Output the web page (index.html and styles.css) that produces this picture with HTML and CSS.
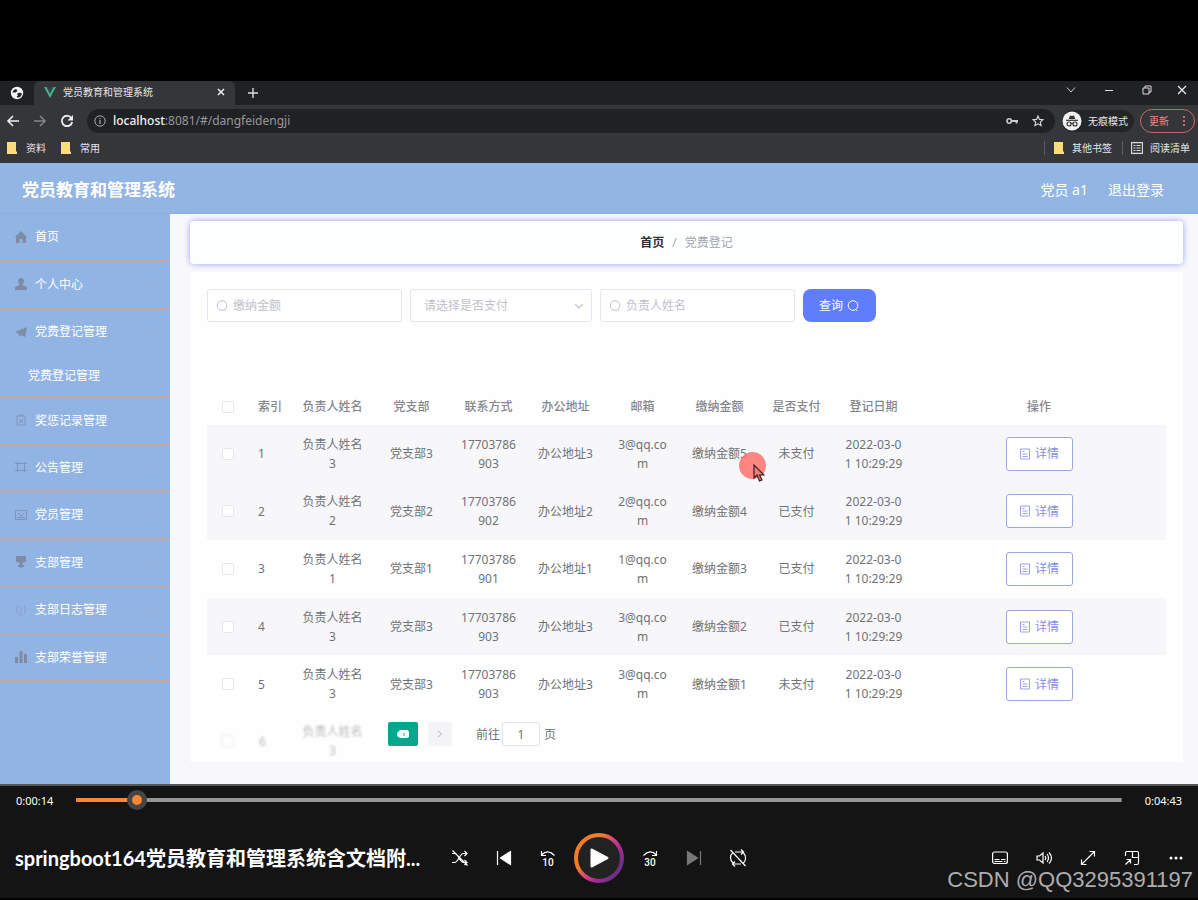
FILE: index.html
```html
<!DOCTYPE html>
<html lang="zh-CN">
<head>
<meta charset="utf-8">
<meta name="viewport" content="width=device-width, initial-scale=1">
<title>党员教育和管理系统</title>
<link rel="stylesheet" href="styles.css">
</head>
<body>
<svg class="defs" width="0" height="0" aria-hidden="true">
  <symbol id="i-search" viewBox="0 0 14 14"><circle cx="7" cy="6.5" r="4.8"/><path d="M9.8 10.5l1.6 1.6"/></symbol>
  <symbol id="i-doc" viewBox="0 0 12 12"><path d="M1.5 1h9v10h-9zM3.5 3.5h2M3.5 6h5M3.5 8.5h5"/></symbol>
  <symbol id="i-folder" viewBox="0 0 12 12"><path d="M1 0h9v9l1 1v2H1z" fill="#fbdc7c"/></symbol>
  <symbol id="i-arrow" viewBox="0 0 8 6"><path d="M1 1.5l3 3 3-3"/></symbol>
</svg>

<main class="video">
  <header class="browser">
    <div class="tabs">
      <span class="tab-pinned"><svg width="14" height="14" viewBox="0 0 14 14"><circle cx="7" cy="7" r="6.2" fill="#f4f4f4"/><path d="M2.500 6.500Q3 3.500 6 3l1.500 1.500L6 6.500H4.500zM7 8l2-1.500 3 1Q11.500 11 8 11.800L6.500 10.500 8 9.500z" fill="#25262a"/></svg></span>
      <div class="tab">
        <svg width="12" height="11" viewBox="0 0 12 11"><path d="M0 0h2.500L6 6.500 9.500 0H12L6 11z" fill="#3fb488"/><path d="M2.500 0h2L6 2.800 7.500 0h2L6 6.500z" fill="#2f4a55"/></svg>
        <span class="tab-title">党员教育和管理系统</span>
        <button class="icon-btn" aria-label="关闭标签"><svg width="8" height="8" viewBox="0 0 8 8"><path d="M1 1l6 6M7 1L1 7" stroke="#eee" stroke-width="1.500"/></svg></button>
      </div>
      <button class="icon-btn new-tab" aria-label="新标签"><svg width="12" height="12" viewBox="0 0 12 12"><path d="M6 1v10M1 6h10" stroke="#ddd" stroke-width="1.400"/></svg></button>
      <div class="window-controls">
        <button class="icon-btn" aria-label="搜索标签"><svg width="10" height="8" viewBox="0 0 10 8"><path d="M1 1.500l4 4.500 4-4.500" stroke="#ccc" fill="none"/></svg></button>
        <button class="icon-btn" aria-label="最小化"><svg width="10" height="8" viewBox="0 0 10 8"><path d="M1 4.500h8" stroke="#ddd"/></svg></button>
        <button class="icon-btn" aria-label="还原"><svg width="10" height="10" viewBox="0 0 10 10"><path d="M1 3h6v6H1zM3 3V1h6v6H7" stroke="#ddd" fill="none"/></svg></button>
        <button class="icon-btn" aria-label="关闭"><svg width="10" height="10" viewBox="0 0 10 10"><path d="M1 1l8 8M9 1L1 9" stroke="#eee" stroke-width="1.200"/></svg></button>
      </div>
    </div>
    <div class="toolbar">
      <button class="icon-btn" aria-label="后退"><svg width="14" height="12" viewBox="0 0 14 12"><path d="M13 6H2M7 1L2 6l5 5" stroke="#eee" stroke-width="1.600" fill="none"/></svg></button>
      <button class="icon-btn" aria-label="前进"><svg width="14" height="12" viewBox="0 0 14 12"><path d="M1 6h11M7 1l5 5-5 5" stroke="#85868a" stroke-width="1.500" fill="none"/></svg></button>
      <button class="icon-btn" aria-label="刷新"><svg width="14" height="14" viewBox="0 0 14 14"><path d="M11.500 4.200A5.200 5.200 0 1 0 12.200 8" stroke="#eee" stroke-width="1.800" fill="none"/><path d="M13 1v5.500H7.500z" fill="#eee"/></svg></button>
      <div class="address">
        <svg width="12" height="12" viewBox="0 0 12 12"><circle cx="6" cy="6" r="5.200" stroke="#aaa" fill="none"/><path d="M6 5v4M6 3v1" stroke="#aaa" stroke-width="1.200"/></svg>
        <span class="url"><b>localhost</b>:8081/#/dangfeidengji</span>
        <svg width="12" height="8" viewBox="0 0 12 8"><circle cx="3.200" cy="4" r="2.200" stroke="#ccc" stroke-width="1.600" fill="none"/><path d="M5.500 4H12M10.500 4v2.500" stroke="#ccc" stroke-width="1.800"/></svg>
        <svg width="12" height="12" viewBox="0 0 12 12"><path d="M6 1l1.400 3.400 3.600.3-2.700 2.400.8 3.600L6 8.800l-3.100 1.900.8-3.600L1 4.700l3.600-.3z" stroke="#ddd" stroke-width="1.100" fill="none"/></svg>
      </div>
      <div class="incognito">
        <svg width="20" height="20" viewBox="0 0 20 20"><circle cx="10" cy="10" r="9.500" fill="#f2f2f3"/><path d="M6.800 8L8 4.500l2 .6 2-.6L13.200 8z" fill="#333"/><path d="M4 9.300h12" stroke="#333" stroke-width="1.200"/><g fill="none" stroke="#333" stroke-width="1.200"><circle cx="7" cy="13" r="2"/><circle cx="13" cy="13" r="2"/><path d="M9 12.600q1-.6 2 0"/></g></svg>
        <span>无痕模式</span>
      </div>
      <button class="update">更新<svg width="4" height="12" viewBox="0 0 4 12" fill="#e8837c"><circle cx="2" cy="2" r="1.100"/><circle cx="2" cy="6" r="1.100"/><circle cx="2" cy="10" r="1.100"/></svg></button>
    </div>
    <div class="bookmarks">
      <a href="#"><svg width="12" height="12"><use href="#i-folder"/></svg>资料</a>
      <a href="#"><svg width="12" height="12"><use href="#i-folder"/></svg>常用</a>
      <a href="#" class="other"><svg width="12" height="12"><use href="#i-folder"/></svg>其他书签</a>
      <a href="#" class="reading"><svg width="12" height="12" viewBox="0 0 12 12"><path d="M.600.600h10.800v10.800H.600zM2.500 3.500h2M2.500 6h2M2.500 8.500h2M5.500 3.500h4M5.500 6h4M5.500 8.500h4" stroke="#ddd" stroke-width="1.100" fill="none"/></svg>阅读清单</a>
    </div>
  </header>

  <div class="app-head">
    <h1>党员教育和管理系统</h1>
    <span>党员 a1</span>
    <a href="#">退出登录</a>
  </div>

  <div class="app-body">
    <nav class="side">
      <ul>
        <li><a href="#"><svg width="12" height="12" viewBox="0 0 12 12"><path d="M6 0l6 6-1 1v5H7.500V8h-3v4H1V7L0 6z"/></svg>首页</a></li>
        <li><a href="#"><svg width="12" height="12" viewBox="0 0 12 12"><circle cx="6" cy="3" r="3"/><path d="M4.500 5h3v2l4.500 2v3H0V9l4.500-2z"/></svg>个人中心<svg class="arrow"><use href="#i-arrow"/></svg></a></li>
        <li class="open"><a href="#"><svg width="12" height="12" viewBox="0 0 12 12"><path d="M0 6l12-5-2 10-4-2-2 2-.5-3.500z"/></svg>党费登记管理<svg class="arrow"><use href="#i-arrow"/></svg></a></li>
        <li class="sub"><a href="#">党费登记管理</a></li>
        <li><a href="#"><svg class="line" width="12" height="12" viewBox="0 0 12 12"><path d="M2 2h8v9H2zM4 1h4M4 5l4 4M8 5L4 9"/></svg>奖惩记录管理<svg class="arrow"><use href="#i-arrow"/></svg></a></li>
        <li><a href="#"><svg class="line" width="12" height="12" viewBox="0 0 12 12"><path d="M0 2.500h12M0 9.500h12M2.500 1v10M9.500 1v10"/></svg>公告管理<svg class="arrow"><use href="#i-arrow"/></svg></a></li>
        <li><a href="#"><svg class="line" width="12" height="12" viewBox="0 0 12 12"><path d="M.500 1.500h11v9H.500zM3 4l3 3 3-3M2 8.500h8"/></svg>党员管理<svg class="arrow"><use href="#i-arrow"/></svg></a></li>
        <li><a href="#"><svg width="12" height="12" viewBox="0 0 12 12"><path d="M1 0h10v5l-1 1.500H7.500V9H9v2H7v1H5v-1H3V9h1.500V6.500H2L1 5z"/></svg>支部管理<svg class="arrow"><use href="#i-arrow"/></svg></a></li>
        <li><a href="#"><svg class="line faint" width="12" height="12" viewBox="0 0 12 12"><path d="M3 1q-3 5 0 9M9 1q3 5 0 9M6 3v6M4 11h4"/></svg>支部日志管理<svg class="arrow"><use href="#i-arrow"/></svg></a></li>
        <li><a href="#"><svg width="12" height="12" viewBox="0 0 12 12"><path d="M0 6h3v6H0zM4.500 0h3v12h-3zM9 3h3v9H9z"/></svg>支部荣誉管理<svg class="arrow"><use href="#i-arrow"/></svg></a></li>
      </ul>
    </nav>

    <section class="content">
      <div class="crumbs"><b>首页</b><i>/</i><span>党费登记</span></div>
      <div class="panel">
        <form class="search">
          <label class="field"><svg width="14" height="14"><use href="#i-search"/></svg><input type="text" placeholder="缴纳金额" aria-label="缴纳金额"></label>
          <div class="field select"><select aria-label="是否支付"><option>请选择是否支付</option></select><svg width="10" height="8"><use href="#i-arrow"/></svg></div>
          <label class="field"><svg width="14" height="14"><use href="#i-search"/></svg><input type="text" placeholder="负责人姓名" aria-label="负责人姓名"></label>
          <button type="button" class="query">查询<svg width="14" height="14"><use href="#i-search"/></svg></button>
        </form>

        <table>
          <colgroup><col class="c-check"><col class="c-idx"><col class="c-name"><col class="c"><col class="c"><col class="c"><col class="c"><col class="c"><col class="c"><col class="c"><col></colgroup>
          <thead><tr><th><input type="checkbox" aria-label="全选"></th><th class="left">索引</th><th>负责人姓名</th><th>党支部</th><th>联系方式</th><th>办公地址</th><th>邮箱</th><th>缴纳金额</th><th>是否支付</th><th>登记日期</th><th>操作</th></tr></thead>
          <tbody>
            <tr class="shade"><td><input type="checkbox" aria-label="选择 1"></td><td class="left">1</td><td>负责人姓名3</td><td>党支部3</td><td>17703786903</td><td>办公地址3</td><td>3@qq.com</td><td class="pointed">缴纳金额5<span class="pointer"><svg width="12" height="19" viewBox="0 0 12 19"><path d="M1 1v13l3-3 2.500 6 2.500-1-2.500-5H11z" fill="#f77b78" stroke="#3b1d1d" stroke-width="1.200"/></svg></span></td><td>未支付</td><td>2022-03-01 10:29:29</td><td><button class="detail"><svg width="12" height="12"><use href="#i-doc"/></svg>详情</button></td></tr>
            <tr class="shade"><td><input type="checkbox" aria-label="选择 2"></td><td class="left">2</td><td>负责人姓名2</td><td>党支部2</td><td>17703786902</td><td>办公地址2</td><td>2@qq.com</td><td>缴纳金额4</td><td>已支付</td><td>2022-03-01 10:29:29</td><td><button class="detail"><svg width="12" height="12"><use href="#i-doc"/></svg>详情</button></td></tr>
            <tr><td><input type="checkbox" aria-label="选择 3"></td><td class="left">3</td><td>负责人姓名1</td><td>党支部1</td><td>17703786901</td><td>办公地址1</td><td>1@qq.com</td><td>缴纳金额3</td><td>已支付</td><td>2022-03-01 10:29:29</td><td><button class="detail"><svg width="12" height="12"><use href="#i-doc"/></svg>详情</button></td></tr>
            <tr class="shade"><td><input type="checkbox" aria-label="选择 4"></td><td class="left">4</td><td>负责人姓名3</td><td>党支部3</td><td>17703786903</td><td>办公地址3</td><td>3@qq.com</td><td>缴纳金额2</td><td>已支付</td><td>2022-03-01 10:29:29</td><td><button class="detail"><svg width="12" height="12"><use href="#i-doc"/></svg>详情</button></td></tr>
            <tr><td><input type="checkbox" aria-label="选择 5"></td><td class="left">5</td><td>负责人姓名3</td><td>党支部3</td><td>17703786903</td><td>办公地址3</td><td>3@qq.com</td><td>缴纳金额1</td><td>未支付</td><td>2022-03-01 10:29:29</td><td><button class="detail"><svg width="12" height="12"><use href="#i-doc"/></svg>详情</button></td></tr>
          </tbody>
        </table>

        <div class="foot">
          <div class="fading"><input type="checkbox" aria-label="选择 6"><span class="num">6</span><span class="who">负责人姓名3</span></div>
          <div class="pager">
            <button class="current" aria-label="当前页"><svg width="14" height="10" viewBox="0 0 14 10"><path d="M1 4l3-3h8l1 2v5l-2 1H4L1 7z" fill="#e9fffa"/><path d="M7 4h2v3H7z" fill="#8fd8c8"/></svg></button>
            <button class="next" aria-label="下一页"><svg width="6" height="8" viewBox="0 0 6 8"><path d="M1 1l3.500 3L1 7" stroke="#b0b2b8" fill="none"/></svg></button>
            <label for="page">前往</label><input id="page" type="text" value="1"><span>页</span>
          </div>
        </div>
      </div>
    </section>
  </div>
</main>

<footer class="player">
  <div class="seek"><span>0:00:14</span><input type="range" min="0" max="283" value="14" aria-label="播放进度"><span>0:04:43</span></div>
  <div class="controls">
    <h2>springboot164党员教育和管理系统含文档附...</h2>
    <div class="group">
      <button aria-label="随机播放"><svg width="18" height="16" viewBox="0 0 18 16"><path d="M1 12.500h2.500c4 0 5-9 9-9H16M1 3.500h2.500c4 0 5 9 9 9H16M13.500 1L16 3.500 13.500 6M13.500 10l2.500 2.500-2.500 2.500M1.500.500l15 15"/></svg></button>
      <button aria-label="上一个"><svg width="16" height="16" viewBox="0 0 16 16"><path d="M1.500 1v14"/><path d="M14.500 1.500v13L4.500 8z" fill="#fff"/></svg></button>
      <button class="skip" aria-label="后退 10 秒"><svg width="16" height="8" viewBox="0 0 16 8"><path d="M1.500 1v4.500H6M1.500 5Q8-1.500 14.500 5.500"/></svg><span>10</span></button>
      <button class="play" aria-label="播放"><svg width="50" height="50" viewBox="0 0 50 50"><defs><linearGradient id="ring" x1="0.100" y1="0.200" x2="0.900" y2="0.800"><stop offset=".25" stop-color="#f07c28"/><stop offset=".55" stop-color="#d43c86"/><stop offset=".72" stop-color="#a62c90"/><stop offset="1" stop-color="#6a3088"/></linearGradient></defs><circle cx="25" cy="25" r="23" fill="#222" stroke="url(#ring)" stroke-width="4"/><path d="M17.500 16.500v17L33.500 25z" fill="#fff" stroke="#fff" stroke-width="2" stroke-linejoin="round"/></svg></button>
      <button class="skip" aria-label="前进 30 秒"><svg width="16" height="8" viewBox="0 0 16 8"><path d="M14.500 1v4.500H10M14.500 5Q8-1.500 1.500 5.500"/></svg><span>30</span></button>
      <button class="off" aria-label="下一个"><svg width="16" height="16" viewBox="0 0 16 16"><path d="M14.500 1v14"/><path d="M1.500 1.500v13L11.500 8z" fill="#777"/></svg></button>
      <button aria-label="循环"><svg width="18" height="18" viewBox="0 0 18 18"><path d="M6 3h8M12 .500L14.500 3 12 5.500M3.500 4Q1.500 5.500 1.500 9q0 3 2.500 5M12 15H4M6 12.500L3.500 15 6 17.500M14.500 14q2-1.500 2-5 0-3-2-5M1.500 1l15 16"/></svg></button>
    </div>
    <div class="group right">
      <button aria-label="字幕"><svg width="16" height="14" viewBox="0 0 16 14"><rect x=".600" y="1" width="14.800" height="11.500" rx="2"/><path d="M2.500 8.500h5M9 8.500h4.500M2.500 10.500h8M12 10.500h1.500"/></svg></button>
      <button aria-label="音量"><svg width="17" height="14" viewBox="0 0 17 14"><path d="M1 5v4h2.500L7 12V2L3.500 5zM9 5q1.500 2 0 4M11 3q3 4 0 8M13 1.500q5 5.500 0 11"/></svg></button>
      <button aria-label="全屏"><svg width="16" height="16" viewBox="0 0 16 16"><path d="M1.500 14.500l13-13M9.500 1.500h5v5M1.500 9.500v5h5"/></svg></button>
      <button aria-label="迷你视图"><svg width="16" height="16" viewBox="0 0 16 16"><path d="M1.500 6V3q0-1.500 1.500-1.500h10q1.500 0 1.500 1.500v10q0 1.500-1.500 1.500H10M8.500 1.500v6h6M1.500 14.500l5-5M2.500 9.500h4v4"/></svg></button>
      <button aria-label="更多"><svg width="14" height="4" viewBox="0 0 14 4"><g fill="#fff" stroke="none"><circle cx="2" cy="2" r="1.500"/><circle cx="7" cy="2" r="1.500"/><circle cx="12" cy="2" r="1.500"/></g></svg></button>
    </div>
  </div>
  <span class="watermark">CSDN @QQ3295391197</span>
</footer>
</body>
</html>
```
FILE: styles.css
```css
* { box-sizing: border-box; }
body {
  margin: 0;
  min-height: 100vh;
  display: flex;
  flex-direction: column;
  background: #000;
  font: 12px/19px "Noto Sans", "Noto Sans CJK SC", sans-serif;
}
.defs { position: absolute; }
button, input, select { font: inherit; color: inherit; }
button { border: 0; padding: 0; background: none; }
a { color: inherit; text-decoration: none; }
svg { display: block; flex: none; }

.video { flex: 1; display: flex; flex-direction: column; padding-top: 81px; }

/* browser frame */
.browser { background: #35363a; color: #e6e6e8; font-size: 10px; line-height: 16px; }
.tabs { display: flex; height: 24px; background: #202125; }
.tab-pinned { width: 34px; display: grid; place-items: center; }
.tab { width: 201px; display: flex; align-items: center; gap: 7px; padding: 0 10px 2px; background: #35363a; border-radius: 6px 6px 0 0; }
.tab-title { flex: 1; }
.icon-btn { display: grid; place-items: center; }
.new-tab { width: 36px; }
.window-controls { margin-left: auto; display: flex; padding-bottom: 6px; }
.window-controls .icon-btn { width: 38px; }
.window-controls .icon-btn:last-child { width: 32px; }
.toolbar { display: flex; align-items: center; height: 32px; padding: 0 3px 0 6px; gap: 13px; }
.address { flex: 1; height: 24px; display: flex; align-items: center; gap: 14px; padding: 0 11px 0 7px; background: #202125; border-radius: 12px; margin-right: -6px; }
.url { flex: 1; font-size: 12px; color: #97989c; margin-left: -7px; }
.url b { font-weight: 500; color: #f2f2f2; }
.incognito { display: flex; align-items: center; gap: 6px; height: 22px; padding-right: 6px; background: #242529; border-radius: 11px; margin-right: -7px; }
.update { display: flex; align-items: center; justify-content: space-between; width: 55px; height: 24px; padding: 0 8px; border: 1px solid #c56a66; border-radius: 12px; color: #ee8a82; }
.bookmarks { display: flex; align-items: center; height: 26px; padding: 0 8px 5px 6px; gap: 14px; }
.bookmarks a { display: flex; align-items: center; gap: 8px; }
.bookmarks .other { margin-left: auto; margin-right: -4px; }
.bookmarks .other, .bookmarks .reading { border-left: 1px solid #5c5d61; padding-left: 8px; gap: 7px; line-height: 14px; }

/* application header */
.app-head { height: 51px; display: flex; align-items: center; padding: 2px 34px 0 22px; gap: 20px; background: #92b5e4; color: #fff; font-size: 14px; border-bottom: 1px solid #8aafe0; }
.app-head h1 { margin: 0 auto 0 0; font-size: 17px; font-weight: 700; }
.app-body { flex: 1; display: flex; }

/* side menu */
.side { width: 170px; flex: none; background: #92b4e4; color: #fff; }
.side ul { list-style: none; margin: 0; padding: 0; min-height: 468px; display: flex; flex-direction: column; }
.side li { flex: 1; display: flex; border-bottom: 2px solid #bfa9a2; }
.side li.open { border-bottom-color: transparent; }
.side li.sub { flex: none; height: 41px; }
.side a { flex: 1; display: flex; align-items: center; gap: 8px; padding: 0 16px 0 15px; }
.side .sub a { padding-left: 28px; }
.side svg { fill: #7e8ba5; }
.side svg.line { fill: none; stroke: #8094b8; }
.side svg.faint { stroke: #87a0c8; }
.side svg.arrow { width: 8px; height: 6px; margin-left: auto; fill: none; stroke: #b5a4b4; }

/* main area */
.content { flex: 1; min-width: 0; padding: 7px 15px 22px 20px; background: #f8f8fa; }
.crumbs { height: 43px; display: flex; align-items: center; justify-content: center; background: #fdfffe; border-radius: 4px; box-shadow: 0 0 6px #999efa; color: #a4a6ae; }
.crumbs b { color: #303133; }
.crumbs i { font-style: normal; margin: 0 8px; }
.panel { margin-top: 8px; padding: 17px 17px 2px; background: #fefefe; }
.search { display: flex; gap: 8px; }
.field { width: 195px; height: 33px; display: flex; align-items: center; gap: 4px; padding: 0 7px; border: 1px solid #e4e5ee; border-radius: 3px; background: #fff; }
.field svg { fill: none; stroke: #bfc1cb; }
.field input { flex: 1; min-width: 0; padding: 0; border: 0; outline: 0; background: none; }
.field input::placeholder { color: #bfc1ca; }
.select { width: 182px; padding-left: 13px; }
.select select { flex: 1; min-width: 0; appearance: none; border: 0; padding: 0; background: none; color: #bfc1ca; }
.query { width: 73px; height: 33px; display: flex; align-items: center; justify-content: center; gap: 3px; border-radius: 8px; background: #5f7dfd; color: #fff; }
.query svg { fill: none; stroke: #fff; }

table { width: 100%; height: 325px; margin-top: 66px; border-collapse: collapse; table-layout: fixed; text-align: center; color: #707276; }
.c-check { width: 41px; }
.c-idx { width: 44px; }
.c-name { width: 81px; }
.c { width: 77px; }
th { height: 37px; padding: 0; font-weight: 500; color: #85878d; }
td { height: 57px; padding: 0 9px; word-break: break-all; }
td:first-child { padding: 0; }
.left { text-align: left; padding: 0 0 0 10px; }
.shade { background: #f7f7f9; }
input[type="checkbox"] { appearance: none; display: block; width: 12px; height: 12px; margin: 0 auto; border: 1px solid #e6e7ec; border-radius: 2px; background: #fff; }
.detail { display: flex; align-items: center; justify-content: center; gap: 4px; width: 67px; height: 34px; margin: 0 auto; border: 1px solid #a0a5e0; border-radius: 3px; background: #fff; color: #858de8; }
.detail svg { fill: none; stroke: #9ba2ea; }
.pointed { position: relative; }
.pointer { position: absolute; z-index: 1; left: 58px; top: 27px; width: 27px; height: 27px; padding: 12px 0 0 14px; border-radius: 50%; background: rgba(255, 105, 100, .8); }

.foot { display: flex; align-items: flex-start; margin-top: 9px; }
.fading { display: flex; align-items: center; width: 181px; color: #a4a6aa; filter: blur(1px); opacity: .8; }
.fading input { margin: 0 14px; }
.fading .num { width: 45px; padding-left: 12px; }
.fading .who { width: 61px; margin-left: 10px; text-align: center; }
.pager { display: flex; align-items: center; color: #707276; }
.pager button { height: 24px; display: grid; place-items: center; }
.pager .current { width: 30px; background: #06a78b; border-radius: 2px; }
.pager .next { width: 24px; margin: 0 24px 0 10px; background: #f4f4f6; }
.pager input { width: 38px; height: 24px; margin: 0 4px 0 2px; padding: 0; border: 1px solid #e2e3ea; border-radius: 3px; text-align: center; background: #fff; }

/* player */
.player { position: relative; height: 116px; background: #141414; border-top: 2px solid #555759; border-bottom: 2px solid #000; color: #fff; }
.seek { display: flex; align-items: center; gap: 23px; height: 28px; padding: 0 16px; font-size: 11px; }
.seek input { flex: 1; min-width: 0; height: 20px; margin: 0; appearance: none; border-radius: 2px; background: linear-gradient(90deg, #ff8533 5%, #949494 5%) center / 100% 4px no-repeat; }
.seek input::-webkit-slider-thumb { appearance: none; width: 20px; height: 20px; border: 5px solid #454545; border-radius: 50%; background: #ff8533; }
.controls { display: grid; grid-template-columns: 1fr auto 1fr; align-items: center; height: 60px; margin-top: 14px; }
.controls h2 { margin: 0; padding-left: 15px; font: 700 20px/28px Lato, "Noto Sans CJK SC", sans-serif; white-space: nowrap; }
.group { display: flex; align-items: center; }
.group.right { justify-content: flex-end; }
.group button { width: 44px; height: 44px; display: grid; place-items: center; }
.group svg { fill: none; stroke: #fff; stroke-width: 1.2; }
.group .off svg { stroke: #777; }
.group .play { width: 58px; height: 50px; }
.group .skip { align-content: center; font: 500 10px/9px Roboto, sans-serif; }
.watermark { position: absolute; right: 5px; bottom: 5px; font: 22px/26px "Liberation Sans", sans-serif; color: #adadad; }
```
